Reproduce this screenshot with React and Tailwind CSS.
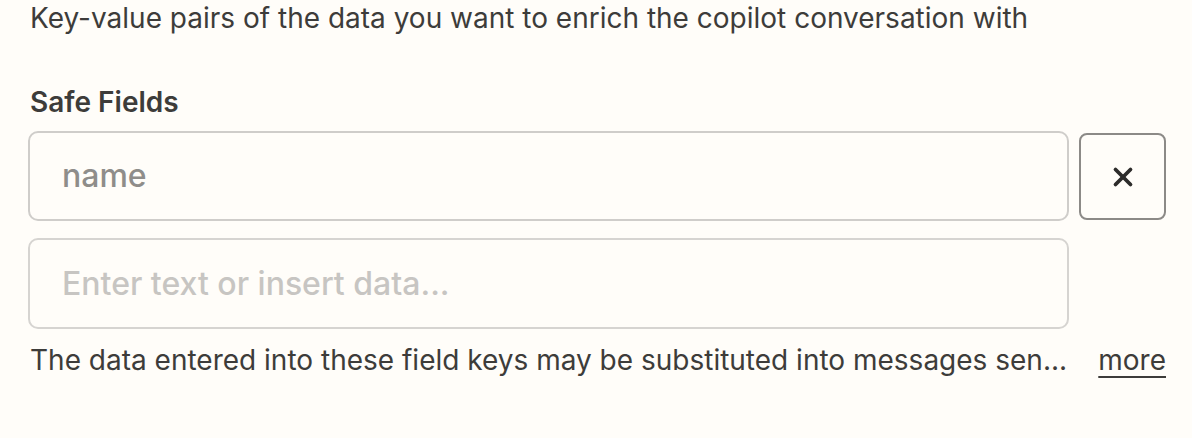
import { X } from "lucide-react";

export default function App() {
  return (
    <div
      className="min-h-screen w-full bg-[#fffdf9] text-[#3d3c3a] pl-[30px] pr-[26px]"
      style={{ fontFamily: "Inter, 'Noto Sans', sans-serif" }}
    >
      <p className="text-[28px] leading-[36px]">
        Key-value pairs of the data you want to enrich the copilot conversation with
      </p>

      <div className="mt-[48px] text-[28px] font-semibold leading-[36px]">Safe Fields</div>

      <div className="mt-[11px] -ml-[2px] flex items-start gap-[10px]">
        <div className="flex-1 flex flex-col gap-[17px]">
          <div className="h-[90px] rounded-[10px] border-2 border-[#cfcdca] bg-[#fffdf9] flex items-center px-[32px]">
            <span className="text-[32px] font-medium text-[#8f8d8a]">name</span>
          </div>
          <div className="h-[91px] rounded-[10px] border-2 border-[#d6d4d1] bg-[#fffdf9] flex items-center px-[32px]">
            <span className="text-[32px] font-medium text-[#c7c5c2]">Enter text or insert data...</span>
          </div>
        </div>
        <button className="mt-[2px] w-[87px] h-[87px] rounded-[8px] border-2 border-[#8c8a87] flex items-center justify-center text-[#2d2c2b]">
          <X size={30} strokeWidth={3} />
        </button>
      </div>

      <div className="mt-[13px] flex items-center justify-between text-[28px] leading-[36px]">
        <span>The data entered into these field keys may be substituted into messages sen...</span>
        <span className="underline underline-offset-[6px] decoration-2">more</span>
      </div>
    </div>
  );
}
